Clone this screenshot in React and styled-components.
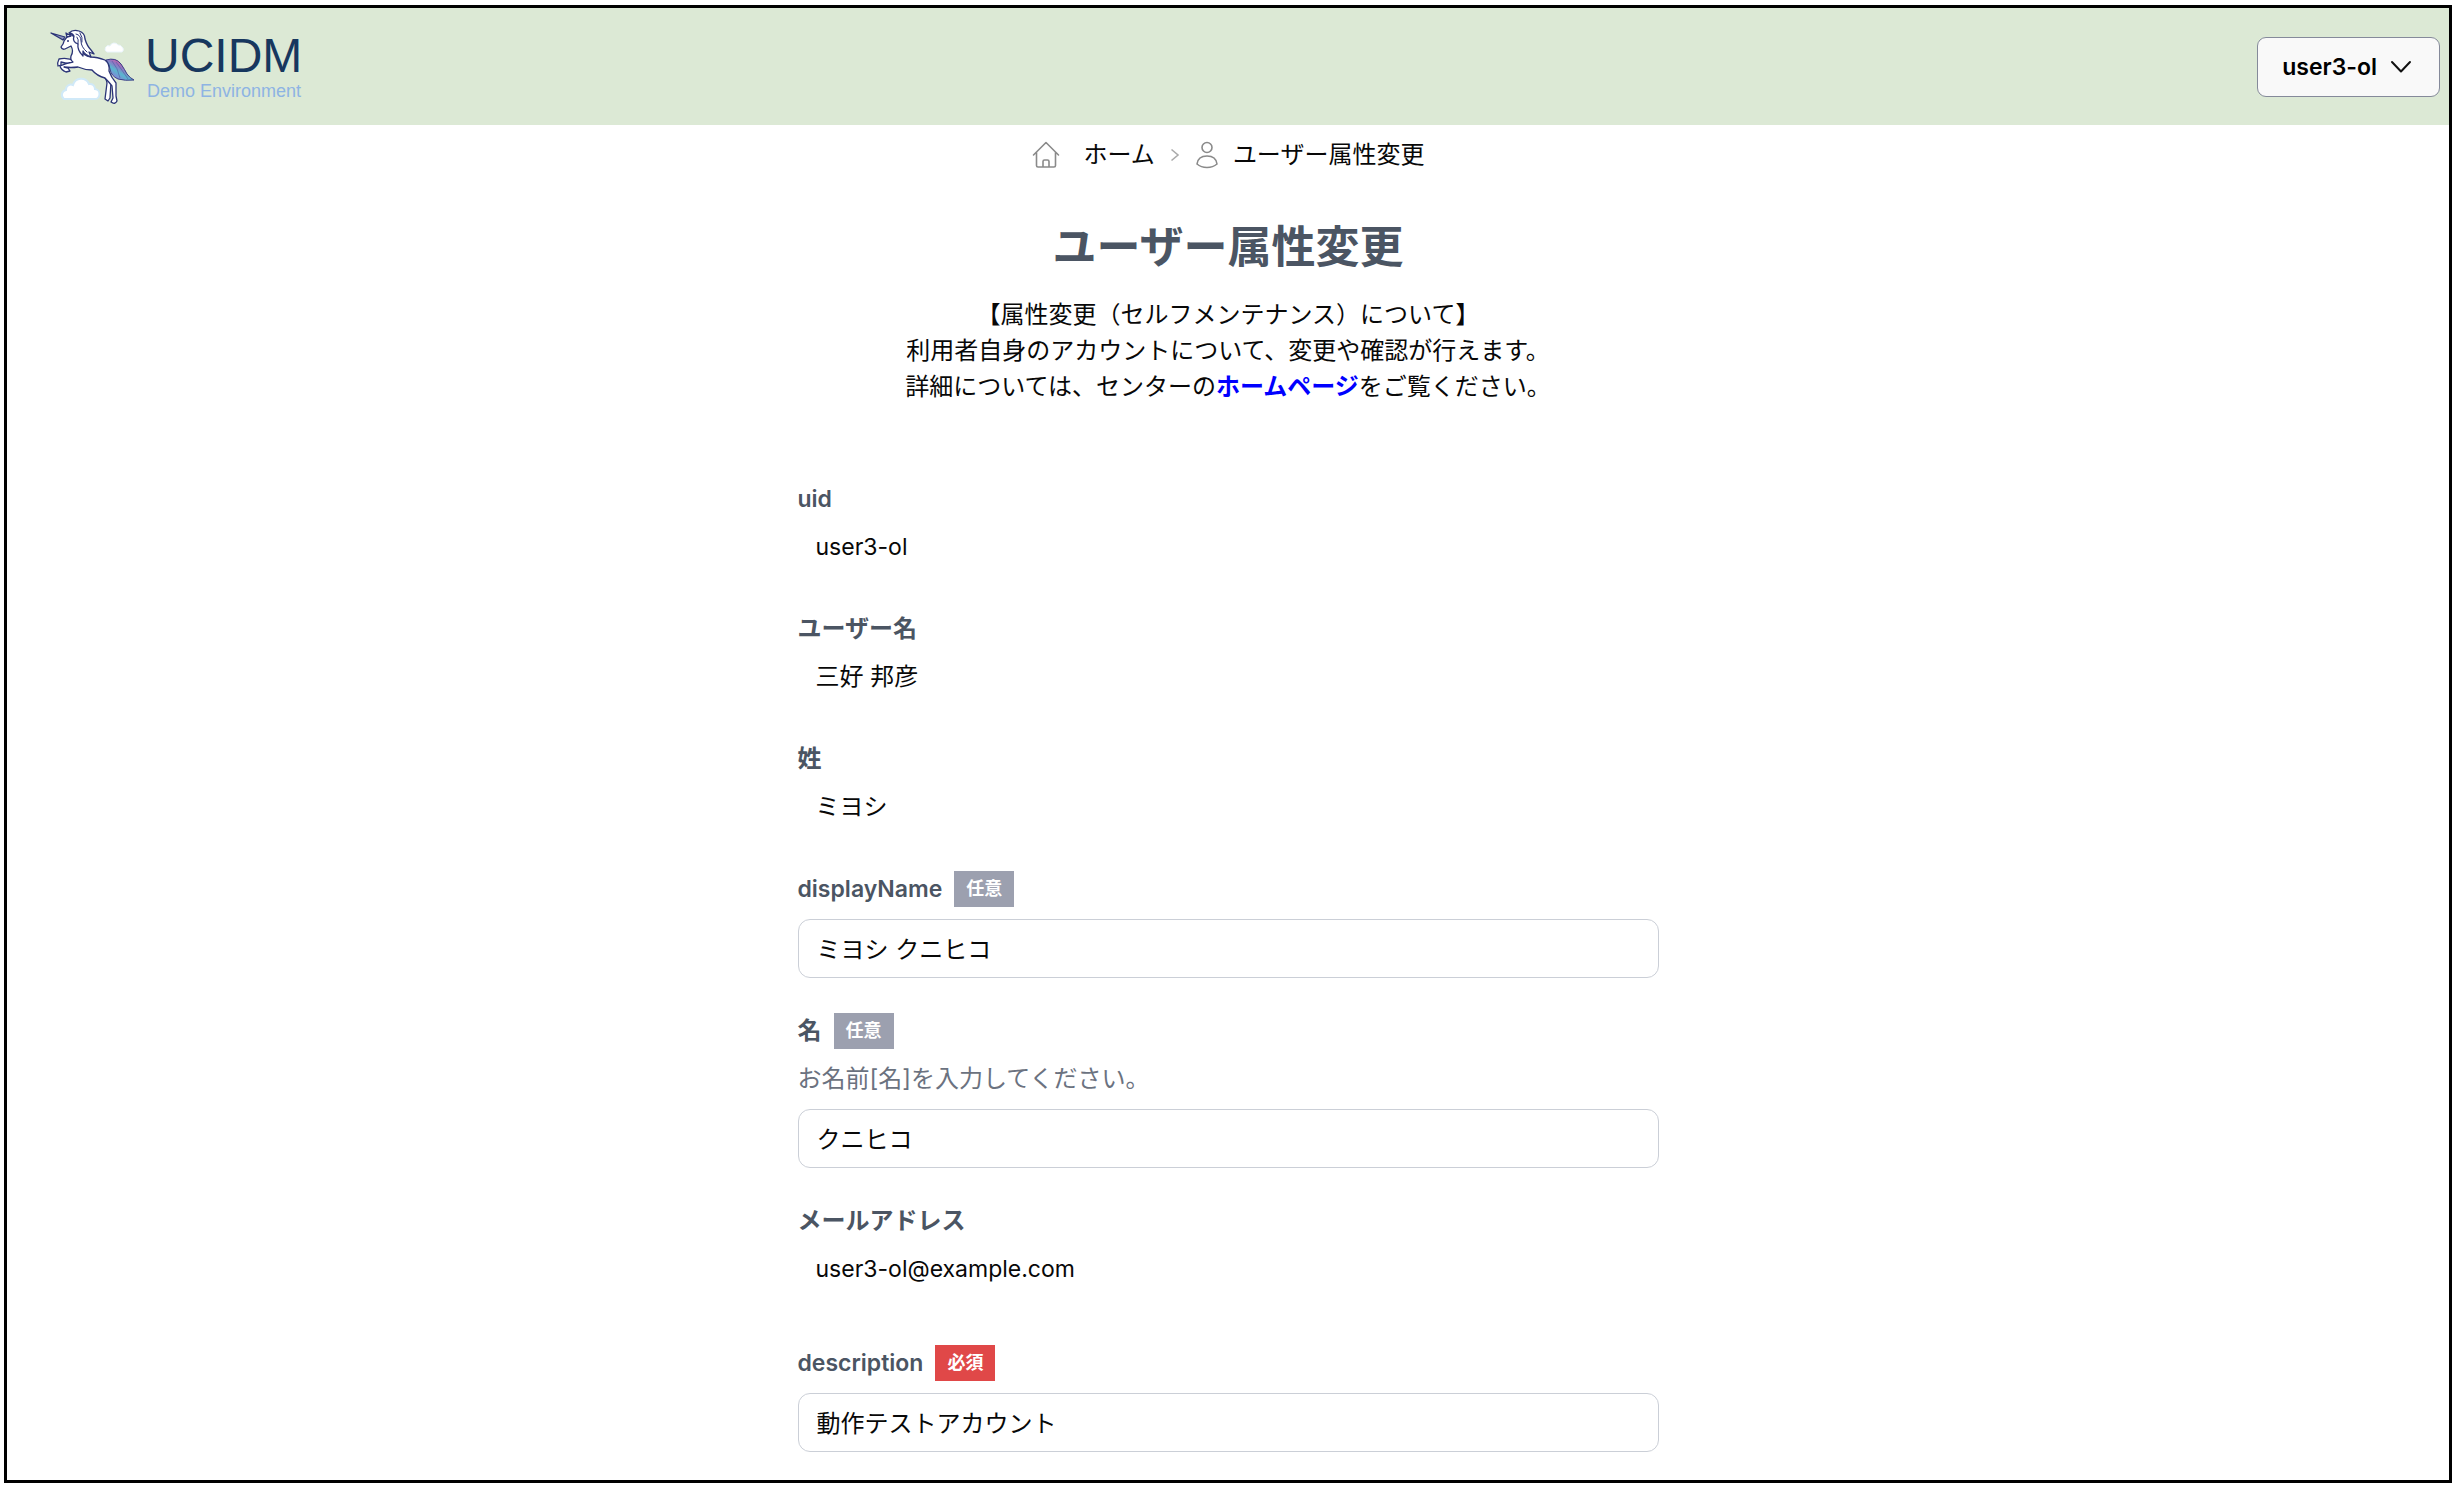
import React from "react";
import styled, { createGlobalStyle } from "styled-components";

const GlobalStyle = createGlobalStyle`
  *, *::before, *::after { box-sizing: border-box; }
  body {
    margin: 0;
    background: #fff;
    color: #080808;
    font-family: Inter, "Noto Sans CJK JP", sans-serif;
    font-size: 24px;
    line-height: 36px;
  }
  h1, p, ol { margin: 0; padding: 0; }
`;

const Page = styled.div`
  min-height: 100vh;
  padding: 5px 4px 3px;
  display: flex;
`;

const Frame = styled.div`
  flex: 1;
  padding-bottom: 24px;
  border: 3px solid #000;
`;

const Header = styled.header`
  display: flex;
  align-items: center;
  justify-content: space-between;
  height: 117px;
  padding: 0 9px 0 40px;
  background: #dce9d5;
`;

const Brand = styled.a`
  display: flex;
  align-items: center;
  gap: 6px;
  text-decoration: none;
  font-family: "Liberation Sans", Arial, sans-serif;
`;

const BrandText = styled.span`
  display: flex;
  flex-direction: column;
`;

const BrandName = styled.span`
  font-size: 48px;
  line-height: 49px;
  color: #17375e;
`;

const BrandSub = styled.span`
  padding-left: 2px;
  font-size: 18px;
  line-height: 22px;
  color: #8eb4e3;
`;

const UserButton = styled.button`
  display: flex;
  align-items: center;
  justify-content: space-between;
  height: 60px;
  gap: 13px;
  padding: 0 27px 0 24px;
  border: 1px solid #858a9a;
  border-radius: 9px;
  background: #f9f9f9;
  color: #000;
  font: inherit;
  font-size: 23px;
  font-weight: 600;
  white-space: nowrap;
`;

const Main = styled.main`
  width: 100%;
  max-width: 861px;
  margin: 0 auto;
`;

const Crumbs = styled.ol`
  display: flex;
  align-items: center;
  justify-content: center;
  padding-top: 12px;
  list-style: none;
`;

const Crumb = styled.li`
  display: flex;
  align-items: center;
  gap: ${(p) => p.$gap}px;
`;

const CrumbLink = styled.a`
  color: inherit;
  text-decoration: none;
`;

const Separator = styled.li`
  display: flex;
  padding: 0 16px 0 15px;
`;

const Title = styled.h1`
  padding: 48px 0 24px;
  color: #4b5563;
  font-size: 44px;
  line-height: 52px;
  font-weight: 700;
  text-align: center;
`;

const Lead = styled.p`
  margin-bottom: 76px;
  text-align: center;
`;

const LeadLink = styled.a`
  color: #0000ff;
  font-weight: 700;
  text-decoration: none;
`;

const Form = styled.form`
  display: flex;
  flex-direction: column;
  gap: 35px;
`;

const Field = styled.div`
  display: flex;
  flex-direction: column;
  gap: 12px;
`;

const LabelRow = styled.div`
  display: flex;
  align-items: center;
  gap: 12px;
  color: #4b5563;
  font-size: ${(p) => (p.$latin ? 23 : 24)}px;
  font-weight: 600;
`;

const Badge = styled.span`
  padding: 0 12px;
  background: ${(p) => (p.$required ? "#e04848" : "#9ca0af")};
  color: #fff;
  font-size: 18px;
  font-weight: 700;
`;

const Value = styled.div`
  padding: 0 18px ${(p) => (p.$roomy ? 23 : 11)}px;
  font-size: ${(p) => (p.$latin ? 23 : 24)}px;
`;

const Hint = styled.p`
  color: #6b7280;
`;

const TextInput = styled.input`
  width: 100%;
  height: 59px;
  padding: 0 18px 2px;
  border: 1px solid #cbcfd7;
  border-radius: 12px;
  background: #fff;
  color: inherit;
  font: inherit;
  outline: none;
`;

const Unicorn = () => (
  <svg width="92" height="84" viewBox="46 26 92 84" fill="none" aria-hidden="true">
    <defs>
      <linearGradient id="tail" x1="122" y1="63" x2="111" y2="80" gradientUnits="userSpaceOnUse">
        <stop offset="0" stopColor="#d65a9c" />
        <stop offset="0.3" stopColor="#8d78c4" />
        <stop offset="0.55" stopColor="#58b7cf" />
        <stop offset="0.8" stopColor="#7c8ed6" />
        <stop offset="1" stopColor="#a065bb" />
      </linearGradient>
    </defs>
    <path d="M63 100H93a5 5 0 0 0 1-10 5 5 0 0 0-6-5 8.500 8.500 0 0 0-16 1 5 5 0 0 0-7 5 5 5 0 0 0-2 9z" fill="#fff" stroke="#d0e9f8" strokeWidth="2" />
    <path d="M106 53h15a3 3 0 0 0 0-5 4 4 0 0 0-4-2 4.500 4.500 0 0 0-8 1 3 3 0 0 0-3 6z" fill="#fff" stroke="#eaf5fc" />
    <path d="M105 61Q115 58 120 65 124 71 126 75 129 79 133 81 124 82 117 80 110 77 109 70 108 64 105 61Z" fill="url(#tail)" stroke="#3a3f86" />
    <path d="M111 62Q117 69 119 79M115 63Q121 71 127 80" stroke="#5963ab" strokeWidth="0.7" />
    <g stroke="#2b3477" strokeWidth="1.300" strokeLinejoin="round" strokeLinecap="round">
      <path d="M100 75Q106 80 106 84L104 100 107 102 109 99 110 83 108 74Z" fill="#fff" />
      <path d="M74 62Q66 58 58 60 56 64 57 67L60 66 60 63 72 66Z" fill="#fff" />
      <path d="M66 38Q63 41 62 45L60 48Q61 51 64 50L70 47Q73 52 70 57 69 61 72 63 65 64 59 67 60 71 65 73L69 72 67 69 63 68Q70 69 77 68 84 71 91 71 96 77 104 79 108 83 111 87L112 99 110 103Q114 106 116 102L115 97 115 84Q110 78 108 72 109 65 104 61 96 58 90 58 82 57 80 50L75 39 69 35Z" fill="#fff" />
      <path d="M50 34 64 38 62 41Z" fill="#8b93bd" />
      <path d="M66 38 65 34 70 37Z" fill="#fff" />
      <path d="M68 34Q72 30 78 32 84 34 84 40 86 47 90 51L93 55 88 53 90 58Q84 56 82 52L82 57Q76 51 77 45 71 43 73 37 71 34 68 34Z" fill="#fff" />
      <path d="M75 35Q80 36 80 42 80 48 86 53M79 34Q82 38 81 43M77 45Q78 40 76 38" strokeWidth="1" />
    </g>
    <circle cx="67" cy="42" r="1" fill="#2b3477" />
  </svg>
);

const HomeIcon = () => (
  <svg width="28" height="28" viewBox="0 0 28 28" fill="none" stroke="#8a8a8a" strokeWidth="1.6" strokeLinejoin="round" strokeLinecap="round" aria-hidden="true">
    <path d="M1.500 14L14 1.500 26.500 14M4.500 11.500v13q0 1.500 1.500 1.500h16q1.500 0 1.500-1.500v-13M11 26v-5.500q0-1.500 1.500-1.500h3q1.500 0 1.500 1.500V26" />
  </svg>
);

const PersonIcon = () => (
  <svg width="22" height="28" viewBox="0 0 22 28" fill="none" stroke="#8a8a8a" strokeWidth="1.6" aria-hidden="true">
    <circle cx="11" cy="6.500" r="5" />
    <path d="M1 23Q2 15 11 15T21 23Q17 26.500 11 26.500T1 23Z" strokeLinejoin="round" />
  </svg>
);

const ChevronRight = () => (
  <svg width="10" height="14" viewBox="0 0 10 14" fill="none" stroke="#aaa" strokeWidth="1.6" aria-hidden="true">
    <path d="M1.500 1.500L8 7l-6.500 5.500" />
  </svg>
);

const ChevronDown = () => (
  <svg width="22" height="14" viewBox="0 0 22 14" fill="none" stroke="#111" strokeWidth="2" strokeLinecap="round" strokeLinejoin="round" aria-hidden="true">
    <path d="M2 2l9 9.500L20 2" />
  </svg>
);

const fields = [
  { id: "uid", label: "uid", value: "user3-ol" },
  { id: "cn", label: "ユーザー名", value: "三好 邦彦" },
  { id: "sn", label: "姓", value: "ミヨシ" },
  { id: "displayName", label: "displayName", value: "ミヨシ クニヒコ", badge: "任意" },
  { id: "givenName", label: "名", value: "クニヒコ", badge: "任意", hint: "お名前[名]を入力してください。" },
  { id: "mail", label: "メールアドレス", value: "user3-ol@example.com", roomy: true },
  { id: "description", label: "description", value: "動作テストアカウント", badge: "必須", required: true },
];

const isLatin = (text) => /^[\x20-\x7e]+$/.test(text);

const FieldRow = ({ id, label, value, badge, hint, required, roomy }) => (
  <Field>
    <LabelRow $latin={isLatin(label)}>
      {badge ? <label htmlFor={id}>{label}</label> : <span>{label}</span>}
      {badge && <Badge $required={required}>{badge}</Badge>}
    </LabelRow>
    {hint && <Hint>{hint}</Hint>}
    {badge ? (
      <TextInput id={id} type="text" defaultValue={value} required={required} />
    ) : (
      <Value $latin={isLatin(value)} $roomy={roomy}>{value}</Value>
    )}
  </Field>
);

export default function App() {
  return (
    <Page>
      <GlobalStyle />
      <Frame>
        <Header>
          <Brand href="#">
            <Unicorn />
            <BrandText>
              <BrandName>UCIDM</BrandName>
              <BrandSub>Demo Environment</BrandSub>
            </BrandText>
          </Brand>
          <UserButton type="button">
            user3-ol
            <ChevronDown />
          </UserButton>
        </Header>
        <Main>
          <nav>
            <Crumbs>
              <Crumb $gap={24}>
                <HomeIcon />
                <CrumbLink href="#">ホーム</CrumbLink>
              </Crumb>
              <Separator>
                <ChevronRight />
              </Separator>
              <Crumb $gap={15}>
                <PersonIcon />
                <span>ユーザー属性変更</span>
              </Crumb>
            </Crumbs>
          </nav>
          <Title>ユーザー属性変更</Title>
          <Lead>
            【属性変更（セルフメンテナンス）について】
            <br />
            利用者自身のアカウントについて、変更や確認が行えます。
            <br />
            詳細については、センターの<LeadLink href="#">ホームページ</LeadLink>をご覧ください。
          </Lead>
          <Form>
            {fields.map((f) => (
              <FieldRow key={f.id} {...f} />
            ))}
          </Form>
        </Main>
      </Frame>
    </Page>
  );
}
